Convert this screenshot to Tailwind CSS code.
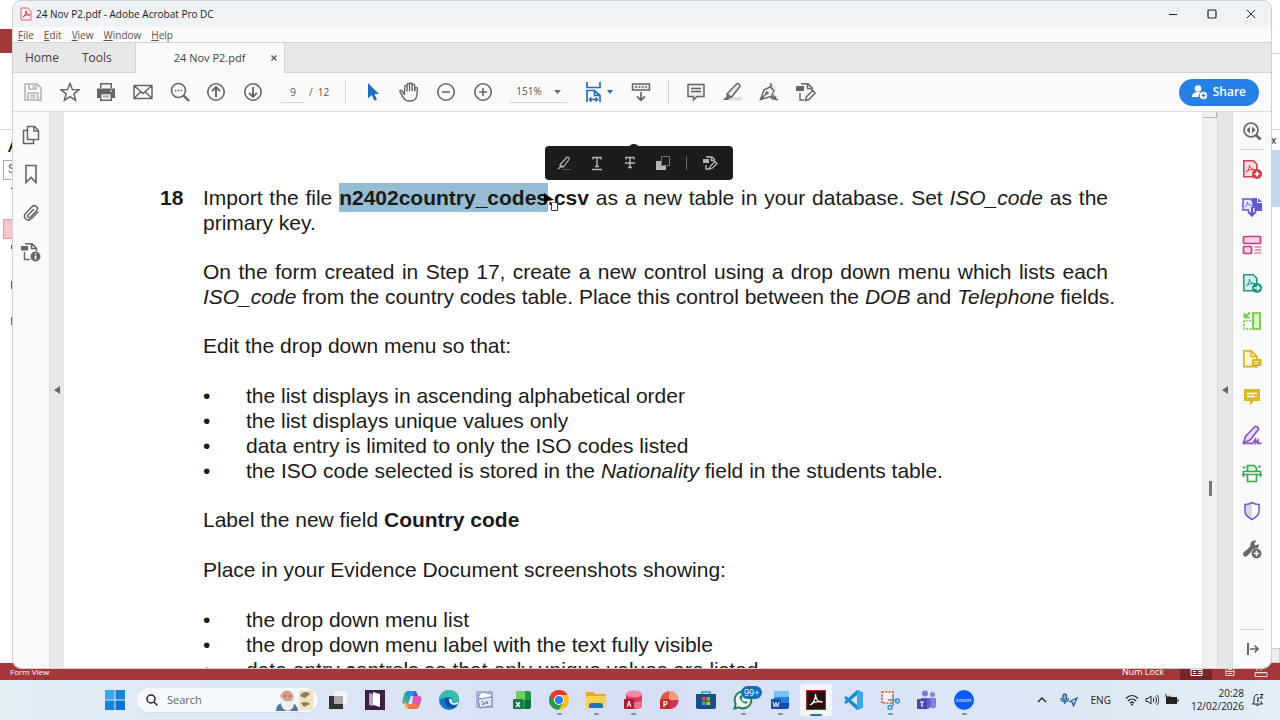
<!DOCTYPE html>
<html lang="en">
<head>
    <meta charset="UTF-8">
    <meta name="viewport" content="width=device-width, initial-scale=1.0">
    <script src="https://cdn.jsdelivr.net/npm/@tailwindcss/browser@4"></script>
    <title>24 Nov P2.pdf - Adobe Acrobat Pro DC</title>
</head>
<body class="h-screen flex flex-col overflow-hidden bg-white font-['Open_Sans','Noto_Sans',sans-serif] text-[#444]">

    <div class="relative flex-1 min-h-0">

        <!-- Access window behind -->
        <div class="h-full flex flex-col" aria-hidden="true">
            <div class="flex-1 min-h-0 flex justify-between overflow-hidden">
                <div class="w-[13px] pt-[29px] overflow-hidden font-['Liberation_Sans',sans-serif]">
                    <div class="h-6 bg-[#a4373a]"></div>
                    <div class="mt-[76px] border-t border-[#d4d4d4] pl-2 pt-1 text-lg leading-6 text-black">A</div>
                    <div class="ml-[3px] mt-[2px] h-5 w-6 border border-[#aaa] pl-1 text-xs text-[#555]">S</div>
                    <div class="ml-[11px] mt-2 h-px bg-[#333]"></div>
                    <div class="ml-[3px] mt-[30px] h-5 w-6 border border-[#d9a0a8] bg-[#f8c4cb]"></div>
                    <div class="ml-[11px] mt-[6px] h-1 bg-[#555]"></div>
                    <div class="ml-[11px] mt-8 h-2 bg-[#666]"></div>
                    <div class="ml-[11px] mt-7 h-2 bg-[#666]"></div>
                </div>
                <div class="w-[9px] pt-[53px] flex flex-col overflow-hidden">
                    <div class="h-[77px] border-y border-[#cfcfcf]"></div>
                    <div class="h-5 text-[10px] leading-5 text-black">x</div>
                    <div class="h-[57px] bg-[#c3d7ee]"></div>
                    <div class="mt-auto h-[15px] border border-[#ccc] bg-[#eee]"></div>
                </div>
            </div>
            <div class="h-[17px] flex items-center bg-[#a4373a] text-[8px] text-white pl-[10px] pr-3">
                <span>Form View</span>
                <span class="ml-auto mr-4 text-[9px]">Num Lock</span>
                <svg class="w-8 h-[17px] bg-[#7a2529]" viewBox="0 0 32 17" fill="none" stroke="#fff"><path d="M11 4.500h11v8H11zM11 6.500h11M13 8.500h3M18 8.500h3M13 10.500h3M18 10.500h3"/></svg>
                <svg class="w-9 h-[17px]" viewBox="0 0 36 17" fill="none" stroke="#f3d4d4"><path d="M14 4.500h8v8h-8zM14 8.500h8M16 6.500h4M16 10.500h4"/></svg>
                <svg class="w-5 h-[17px]" viewBox="0 0 20 17" fill="none" stroke="#f3d4d4"><path d="M7 9.500h12v4H7zM10 9v2M13 9v2M16 9v2M9 8V4h3M12 8l4-4"/></svg>
            </div>
        </div>

        <!-- Acrobat window -->
        <main class="absolute top-px bottom-3 left-[13px] right-[9px] flex flex-col overflow-hidden rounded-lg bg-[#fafafa] outline outline-[#cfcfcf]">
            <header class="h-[26px] shrink-0 flex items-center bg-[#edf3f7] pl-[7px] text-[10px] text-[#1b1b1b]">
                <svg class="mr-1 w-3 h-[14px]" viewBox="0 0 12 14" fill="none"><path d="M1 1h7l3 3v9H1z" fill="#fff0ef" stroke="#d9696b"/><path d="M3 10c2-1 3-4 3-6 0 3 2 4 4 4-2-.5-5 0-7 2z" stroke="#d83b3e"/></svg>
                <h1>24 Nov P2.pdf - Adobe Acrobat Pro DC</h1>
                <div class="ml-auto flex pr-[1px]">
                    <button aria-label="Minimize" class="w-[39px] grid place-items-center"><svg width="10" height="10" stroke="#222"><path d="M1 5.500h8"/></svg></button>
                    <button aria-label="Maximize" class="w-[39px] grid place-items-center"><svg width="10" height="10" stroke="#222" stroke-width="1.200" fill="none"><rect x="1" y="1" width="8" height="8" rx="1"/></svg></button>
                    <button aria-label="Close" class="w-[39px] grid place-items-center"><svg width="10" height="10" stroke="#222"><path d="M1 1l8 8M9 1l-8 8"/></svg></button>
                </div>
            </header>

            <nav class="h-[15px] shrink-0 flex items-center gap-[10px] pl-[5px] text-[10px] leading-none text-[#555]">
                <button><u>F</u>ile</button>
                <button><u>E</u>dit</button>
                <button><u>V</u>iew</button>
                <button><u>W</u>indow</button>
                <button><u>H</u>elp</button>
            </nav>

            <!-- Tabs -->
            <div class="h-[31px] shrink-0 flex bg-[#e7e7e7] border-y border-[#d3d3d3] text-[12px]">
                <button class="pl-3 pr-[11px]">Home</button>
                <button class="pl-3 pr-[23px]">Tools</button>
                <div class="-mb-px w-[150px] flex items-center bg-[#fafafa] border-x border-[#d3d3d3] pl-[38px] pr-[6px] text-[11px]">
                    <span>24 Nov P2.pdf</span>
                    <button aria-label="Close tab" class="ml-auto"><svg width="8" height="8" stroke="#555" stroke-width="1.300"><path d="M1.500 1.500l5 5M6.500 1.500l-5 5"/></svg></button>
                </div>
            </div>

            <!-- Toolbar -->
            <div class="h-[39px] shrink-0 flex items-center border-b border-[#dedede] pl-[2px] pr-3 text-[10px] text-[#555]">
                <div class="grid w-[256px] shrink-0 grid-cols-7 place-items-center">
                    <button aria-label="Save" disabled><svg width="20" height="20" fill="none" stroke="#b5b5b5" stroke-width="1.600"><path d="M2 2h12l4 4v12H2zM6 2v5h7V2M5 18v-7h10v7M7.500 13.500h5M7.500 15.500h5M10.500 3v3"/></svg></button>
                    <button aria-label="Star"><svg width="20" height="20" fill="none" stroke="#666" stroke-width="1.500"><path d="M10 1.500l2.400 6 6.600.3-5.100 4.100 1.700 6.300L10 14.600l-5.600 3.600 1.700-6.300L1 7.800l6.600-.3z"/></svg></button>
                    <button aria-label="Print"><svg width="20" height="20"><path d="M1 6.500h18V16h-3v-4H4v4H1z" fill="#666"/><path d="M4.700 6V1.700h10.600V6M4.700 11.500h10.600v6.800H4.700z" fill="#f5f5f5" stroke="#666" stroke-width="1.500"/><path d="M7 15.500h6v-2H7z" fill="#aaa"/><path d="M14 9h2" stroke="#fff"/></svg></button>
                    <button aria-label="Email"><svg width="20" height="20" fill="none" stroke="#666" stroke-width="1.500"><path d="M1 3.500h18v13H1zM1.500 4l8.500 7.500L18.500 4M1.500 16l6.500-6.500M18.500 16L12 9.500"/></svg></button>
                    <button aria-label="Find"><svg width="20" height="20" fill="none" stroke="#666" stroke-width="1.600"><circle cx="8.500" cy="8.500" r="7"/><path d="M13.500 13.500l5.500 5.500" stroke-width="2.400"/><path d="M4.800 8.500h1.600M7.700 8.500h1.600M10.600 8.500h1.600"/></svg></button>
                    <button aria-label="Previous page"><svg width="20" height="20" fill="none" stroke="#666" stroke-width="1.600"><circle cx="10" cy="10" r="8.200"/><path d="M10 15V5.500M6 9.200l4-4 4 4" stroke-width="1.900"/></svg></button>
                    <button aria-label="Next page"><svg width="20" height="20" fill="none" stroke="#666" stroke-width="1.600"><circle cx="10" cy="10" r="8.200"/><path d="M10 5v9.500M6 10.800l4 4 4-4" stroke-width="1.900"/></svg></button>
                </div>
                <input aria-label="Page number" value="9" class="ml-[10px] w-6 h-[22px] border-b border-[#d5d5d5] text-center">
                <span class="ml-1">/&nbsp; 12</span>
                <div class="ml-4 mr-2 h-6 w-px bg-[#d5d5d5]"></div>
                <div class="grid w-[147px] shrink-0 grid-cols-4 place-items-center">
                    <button aria-label="Select"><svg width="20" height="20" fill="#1f6fc0"><path d="M5 1l11 11h-4.600l2.600 5.600-2.700 1.200-2.500-5.700L5 16.300z"/></svg></button>
                    <button aria-label="Hand"><svg width="20" height="20" fill="none" stroke="#666" stroke-width="1.400" stroke-linecap="round" stroke-linejoin="round"><path d="M5.500 12.500L3 8.800c-.9-1.300-2.600-.3-1.900 1.100l3.400 6c1.300 2.200 3 3.100 5.500 3.100h1c4 0 6.600-2.300 7-6.500l.4-5.700c0-1.700-2-1.800-2.300-.2L15.700 9V3.500c0-1.700-2.500-1.700-2.500 0V8.500 2.200c0-1.700-2.600-1.700-2.600 0v6.300V2.700c0-1.700-2.500-1.700-2.500 0V9 4.700c0-1.600-2.400-1.600-2.400 0z"/></svg></button>
                    <button aria-label="Zoom out"><svg width="20" height="20" fill="none" stroke="#666" stroke-width="1.600"><circle cx="10" cy="10" r="8.200"/><path d="M6 10h8"/></svg></button>
                    <button aria-label="Zoom in"><svg width="20" height="20" fill="none" stroke="#666" stroke-width="1.600"><circle cx="10" cy="10" r="8.200"/><path d="M6 10h8M10 6v8"/></svg></button>
                </div>
                <div class="relative ml-2">
                    <select aria-label="Zoom level" class="appearance-none w-[58px] h-[22px] border-b border-[#d5d5d5] pl-[7px]"><option>151%</option></select>
                    <svg class="absolute right-[6px] top-[9px] pointer-events-none" width="7" height="4" fill="#666"><path d="M0 0h7L3.500 4z"/></svg>
                </div>
                <button aria-label="Fit width" class="ml-[18px] flex items-center gap-[5px]">
                    <svg width="17" height="22" fill="none" stroke="#1f6fc0" stroke-width="1.700"><path d="M2 1v5.500h13V1M2 21V9.500h7.500l5.500 5V21M9.500 9.500v5H15M4.500 18.500h8M6.500 16.500l-2 2 2 2M10.500 16.500l2 2-2 2"/></svg>
                    <svg width="6" height="4" fill="#1f6fc0"><path d="M0 0h6L3 4z"/></svg>
                </button>
                <button aria-label="Scroll mode" class="ml-[18px]"><svg width="20" height="20" fill="none" stroke="#666" stroke-width="1.500"><path d="M1.500 2h17v6h-17z" fill="#eee"/><path d="M4 5h12" stroke-dasharray="2 1.300"/><path d="M10 10v8M6 14.300l4 4 4-4" stroke-width="1.700"/></svg></button>
                <div class="ml-[17px] mr-2 h-6 w-px bg-[#d5d5d5]"></div>
                <div class="grid w-[147px] shrink-0 grid-cols-4 place-items-center">
                    <button aria-label="Comment"><svg width="20" height="20" fill="#eee" stroke="#666" stroke-width="1.500"><path d="M2 2.500h16v12H11l-3.500 3.500v-3.500H2zM5 6.500h10M5 9.500h10"/></svg></button>
                    <button aria-label="Highlight"><svg width="20" height="20" fill="none" stroke="#666" stroke-width="1.500"><path d="M8 15h12v3.500H6z" fill="#ddd" stroke="none"/><path d="M5 12L14.500 2c1.500-1.300 4.500 1 3.200 2.800L9.500 15.300 5.500 15zM5 12l4.500 3.300" fill="#e6e6e6"/><path d="M1 18l4-4 3 2-2 2z" fill="#666" stroke="none"/></svg></button>
                    <button aria-label="Sign"><svg width="20" height="20" fill="none" stroke="#666" stroke-width="1.500"><path d="M12 1l6 6-3 1.500-4-4z" fill="#ddd" stroke="none"/><path d="M1.500 17.500L5 8l6-3 4 4-3 5.500zM1.500 17.500l6-6M11.500 1l1 4M12 17l2.500-3v3l2-2v2.500H19"/><circle cx="8" cy="11" r="1"/></svg></button>
                    <button aria-label="More tools"><svg width="20" height="20" fill="none" stroke="#666" stroke-width="1.500"><path d="M5 1.700h7l4 4v3M11.500 2v4.500H16M4 11v7h4"/><path d="M0 4h8v5H0z" fill="#666" stroke="none"/><path d="M9.500 18.500l.8-3.500 6.500-6.500 2.500 2.500-6.500 6.500z"/></svg></button>
                </div>
                <button class="ml-auto h-[27px] flex items-center gap-[5px] rounded-full bg-[#2680e5] px-[13px] text-[12px] font-semibold text-white">
                    <svg width="16" height="16" fill="#fff"><circle cx="6" cy="4.500" r="3.300"/><path d="M0 13c0-3.500 2.500-5 6-5 1 0 2 .2 2.700.6A5 5 0 0 0 6.500 13z"/><circle cx="11.500" cy="11.500" r="3.700"/><path d="M9.500 11.500h4M11.500 9.500v4" stroke="#2680e5" stroke-width="1.200"/></svg>
                    Share
                </button>
            </div>

            <div class="flex flex-1 min-h-0">
                <!-- Navigation panes -->
                <aside class="w-9 shrink-0 flex flex-col pt-[3px]">
                    <button aria-label="Page thumbnails" class="h-[39px] grid place-items-center"><svg width="18" height="20" fill="none" stroke="#666" stroke-width="1.500"><path d="M5.500 1.500h7l4 4v9h-11zM12 1.500v4.500h4.500M5.500 5.500h-4v13h10v-4"/></svg></button>
                    <button aria-label="Bookmarks" class="h-[39px] grid place-items-center"><svg width="14" height="20" fill="none" stroke="#666" stroke-width="1.600"><path d="M2 1.500h10v17l-5-5-5 5z"/></svg></button>
                    <button aria-label="Attachments" class="h-[39px] grid place-items-center"><svg width="18" height="20" fill="none" stroke="#666" stroke-width="1.500" stroke-linecap="round"><path d="M16 9l-6.500 6.500c-4 4-9.500-.8-5.800-5.300L10 3.800c3.200-3 7.300.8 4.300 4.300L8.500 14c-1.800 1.700-4-.5-2.300-2.300L11.500 6.500"/></svg></button>
                    <button aria-label="Document info" class="h-[39px] grid place-items-center"><svg width="20" height="20" fill="none" stroke="#666" stroke-width="1.500"><path d="M4 1.700h7l4.500 4.500V9M10.500 2v4.500H15M3.500 10v7.500H9"/><path d="M0 4h7v4.500H0z" fill="#666" stroke="none"/><circle cx="14.500" cy="14.500" r="5" fill="#666" stroke="none"/><path d="M14.500 13.500v4M14.500 11.200v1.300" stroke="#fff" stroke-width="1.600"/></svg></button>
                </aside>
                <button aria-label="Toggle navigation pane" class="w-[15px] shrink-0 grid place-items-center bg-[#e8e8e8] border-l border-[#dcdcdc]"><svg width="6" height="8" fill="#666"><path d="M6 0v8L0 4z"/></svg></button>

                <!-- Page -->
                <article class="relative flex-1 min-w-0 overflow-hidden bg-white pt-[26px] pl-24 pr-[94px] font-['Liberation_Sans',Arial,sans-serif] text-[21px] leading-[25px] text-[#1a1a1a]">
                    <p class="text-center font-bold">9</p>
                    <section class="mt-[22px] flex">
                        <b class="w-[43px] shrink-0">18</b>
                        <div class="flex-1 min-w-0">
                            <p class="text-justify">Import the file <b><mark class="bg-[#94bcd3] text-inherit py-[3px]">n2402country_codes</mark>.csv</b> as a new table in your database. Set <i>ISO_code</i> as the primary key.</p>
                            <p class="mt-6 text-justify">On the form created in Step 17, create a new control using a drop down menu which lists each <span class="whitespace-nowrap"><i>ISO_code</i> from the country codes table. Place this control between the <i>DOB</i> and <i>Telephone</i> fields.</span></p>
                            <p class="mt-6">Edit the drop down menu so that:</p>
                            <ul class="mt-[25px]">
                                <li class="flex"><span class="w-[43px] shrink-0">•</span>the list displays in ascending alphabetical order</li>
                                <li class="flex"><span class="w-[43px] shrink-0">•</span>the list displays unique values only</li>
                                <li class="flex"><span class="w-[43px] shrink-0">•</span>data entry is limited to only the ISO codes listed</li>
                                <li class="flex"><span class="w-[43px] shrink-0">•</span><span>the ISO code selected is stored in the <i>Nationality</i> field in the students table.</span></li>
                            </ul>
                            <p class="mt-6">Label the new field <b>Country code</b></p>
                            <p class="mt-[25px]">Place in your Evidence Document screenshots showing:</p>
                            <ul class="mt-[25px]">
                                <li class="flex"><span class="w-[43px] shrink-0">•</span>the drop down menu list</li>
                                <li class="flex"><span class="w-[43px] shrink-0">•</span>the drop down menu label with the text fully visible</li>
                                <li class="flex"><span class="w-[43px] shrink-0">•</span>data entry controls so that only unique values are listed</li>
                            </ul>
                        </div>
                    </section>

                    <!-- Selection toolbar -->
                    <div class="absolute left-[481px] top-[34px] w-[188px] h-[34px] flex items-center gap-[15px] rounded-sm bg-[#1c1c1c] pl-[11px]">
                        <div class="flex gap-[17px]">
                            <button aria-label="Highlight text"><svg width="16" height="16" fill="none" stroke="#b4b4b4" stroke-width="1.200"><path d="M4 10l6.500-7.500c1.200-1 3.500.6 2.500 2L7.500 12 4.500 12zM4 10l3.500 2M2 14l2.500-2"/><path d="M6 14.500h9" stroke="#555"/></svg></button>
                            <button aria-label="Underline text"><svg width="16" height="16" fill="none" stroke="#b4b4b4" stroke-width="1.400"><path d="M4 4.500V2.500h8v2M8 2.500v9M6 11.500h4M3 14.500h10"/></svg></button>
                            <button aria-label="Strikethrough text"><svg width="16" height="16" fill="none" stroke="#b4b4b4" stroke-width="1.400"><path d="M4 4.500V2.500h8v2M8 2.500v10M6 12.500h4M3 8h10"/></svg></button>
                            <button aria-label="Redact"><svg width="16" height="16"><path d="M1 6h5v5h5v4H1z" fill="#b4b4b4"/><path d="M6.500 1.500h8v9h-8z" fill="none" stroke="#777"/></svg></button>
                        </div>
                        <div class="h-[14px] w-px bg-[#666]"></div>
                        <button aria-label="Edit PDF"><svg width="16" height="16" fill="none" stroke="#b4b4b4" stroke-width="1.300"><path d="M4 2h6l3 3M9.500 2v3.500H13M4 10v4h3"/><path d="M1 4h6v4H1z" fill="#b4b4b4" stroke="none"/><path d="M7.500 14l1-3 4.500-4.500 2 2-4.500 4.500z"/></svg></button>
                    </div>
                    <!-- Pointer -->
                    <svg class="absolute left-[479px] top-20" width="18" height="20"><path d="M1 1v10l3-2 7-1z" fill="#000"/><path d="M8.500 10.500h6v8h-6z" fill="#fff" stroke="#333"/><path d="M8 10h4" stroke="#fff"/></svg>
                </article>

                <div class="w-[15px] shrink-0 flex flex-col items-center bg-[#f0f0f0] border-l border-[#e8e8e8]">
                    <div class="h-[6px] w-full border-b border-r border-[#b5b5b5]"></div>
                    <div class="mt-[363px] h-[15px] w-[3px] bg-[#777]"></div>
                </div>
                <button aria-label="Toggle tools pane" class="w-4 shrink-0 grid place-items-center bg-[#e6e6e6] border-x border-[#d8d8d8]"><svg width="6" height="8" fill="#666"><path d="M6 0v8L0 4z"/></svg></button>

                <!-- Tools pane -->
                <aside class="w-[38px] shrink-0 flex flex-col">
                    <button aria-label="Search tools" class="h-[37px] shrink-0 grid place-items-center"><svg width="20" height="20" fill="none" stroke="#666" stroke-width="1.700"><circle cx="9" cy="9" r="7"/><path d="M14 14l4.500 4.500" stroke-width="2.600"/><path d="M8 5.500v7L4.500 9zM10 5.500v7L13.500 9z" fill="#666" stroke="none"/></svg></button>
                    <hr class="mx-[7px] border-[#d5d5d5]">
                    <button aria-label="Create PDF" class="h-[38px] shrink-0 grid place-items-center"><svg width="20" height="20" fill="none"><path d="M1.800 1.800h9.500l3.500 3.500v12.400h-13z" fill="#fbdfe1" stroke="#cf4251" stroke-width="1.600"/><path d="M4 13c2-1.500 3.500-4 3.500-7 0 3 2 4.500 5 4.500-3-.5-6 .5-8.500 2.500z" stroke="#cf4251"/><circle cx="15" cy="15" r="5" fill="#cf3d4d"/><path d="M12.500 15h5M15 12.500v5" stroke="#fff" stroke-width="1.500"/></svg></button>
                    <button aria-label="Combine files" class="h-[38px] shrink-0 grid place-items-center"><svg width="20" height="20" fill="none" stroke="#6159d6" stroke-width="1.500"><path d="M10 1h6l4 4v9h-10z" fill="#6159d6" stroke="none"/><path d="M15.500 1v4.500H20" stroke="#fff" stroke-width="1"/><path d="M1 2h7.500L11 4.500V13H1z" fill="#e8e6fb"/><path d="M3 10c2-1 2.500-3 2.500-5 0 2 2 3.500 4 3.500" stroke-width="1"/><path d="M10 11v7" stroke="#fafafa" stroke-width="5"/><path d="M10 10v8M6 14.500l4 4 4-4" stroke-width="2.200"/></svg></button>
                    <button aria-label="Organize pages" class="h-[38px] shrink-0 grid place-items-center"><svg width="20" height="20" fill="#fad1e6" stroke="#cb3c87" stroke-width="1.700"><rect x="1.500" y="1.500" width="17" height="7" rx="1"/><rect x="1.500" y="11.500" width="8" height="7" rx="1"/><path d="M12.500 12h6.500M12.500 15h6.500M12.500 18h6.500" stroke="#e07bb0" stroke-width="1.300"/></svg></button>
                    <button aria-label="Export PDF" class="h-[38px] shrink-0 grid place-items-center"><svg width="20" height="20" fill="none"><path d="M1.800 1.800h9.500l3.500 3.500v12.400h-13z" fill="#d5efeb" stroke="#24998a" stroke-width="1.600"/><path d="M4 13c2-1.500 3.500-4 3.500-7 0 3 2 4.500 5 4.500-3-.5-6 .5-8.500 2.500z" stroke="#24998a"/><circle cx="15" cy="15" r="5" fill="#179080"/><path d="M12 15h5M15 12.500l2.500 2.500-2.500 2.500" stroke="#fff" stroke-width="1.400"/></svg></button>
                    <button aria-label="Crop pages" class="h-[38px] shrink-0 grid place-items-center"><svg width="20" height="20" fill="none" stroke="#6fc43c" stroke-width="1.700"><path d="M11 2h7v16h-7z" fill="#d9f2c8"/><path d="M9 9.500H2V18h8" stroke-dasharray="2 1.500"/><path d="M2.500 2v4.500H8M3 6l5-4.500"/></svg></button>
                    <button aria-label="Send for comments" class="h-[38px] shrink-0 grid place-items-center"><svg width="20" height="20" fill="none"><path d="M1.800 1.800h7.500l5.500 5.500v10.400h-13z" fill="#fbf2cf" stroke="#d9b51f" stroke-width="1.700"/><path d="M9 2v5.500h5.500" stroke="#d9b51f" stroke-width="1.500"/><path d="M10 10h9.500v7H16l-2.500 2.500V17H10z" fill="#d9b51f"/><path d="M12 12.500h5.500M12 14.500h4" stroke="#fff"/></svg></button>
                    <button aria-label="Comment tool" class="h-[38px] shrink-0 grid place-items-center"><svg width="18" height="20"><path d="M1 2h16v12h-6l-4 4.500V14H1z" fill="#dcb822"/><path d="M4 6.500h10M4 9.500h8" stroke="#fff" stroke-width="1.500"/></svg></button>
                    <button aria-label="Fill and sign" class="h-[38px] shrink-0 grid place-items-center"><svg width="20" height="20" fill="none" stroke="#8659c4" stroke-width="1.700"><path d="M1.500 18l2-6.500 9-9.500c1.700-1.500 5 .6 3.500 3L8 15z" fill="#e8dcf7"/><path d="M1 18.300h9.500l3-4v4l2.500-3v3h3.500"/></svg></button>
                    <button aria-label="Scan" class="h-[38px] shrink-0 grid place-items-center"><svg width="20" height="20" fill="none" stroke="#3aa952" stroke-width="1.700"><path d="M5.500 8V2.500H12L14.500 5v3" fill="#dcf2e0"/><path d="M1.500 14V8.500h17V14M0 11.500h20M5.500 12v6.500h9V12"/><path d="M2 3v3M.5 4.500h3M17.500 2v3M16 3.500h3" stroke-width="1"/></svg></button>
                    <button aria-label="Protect" class="h-[38px] shrink-0 grid place-items-center"><svg width="18" height="20"><path d="M9 1.500c2 1.500 4.500 2 7 2V10c0 4-3 6.500-7 8.500C5 16.500 2 14 2 10V3.500c2.500 0 5-.5 7-2z" fill="#fff"/><path d="M9 1.500v17C5 16.500 2 14 2 10V3.500c2.500 0 5-.5 7-2z" fill="#d9d6f5"/><path d="M9 1.500c2 1.500 4.500 2 7 2V10c0 4-3 6.500-7 8.500C5 16.500 2 14 2 10V3.500c2.500 0 5-.5 7-2z" fill="none" stroke="#6b60c8" stroke-width="1.600"/></svg></button>
                    <button aria-label="More tools pane" class="h-[38px] shrink-0 grid place-items-center"><svg width="20" height="20"><path d="M1.500 13.500l7-6C7.500 3.500 11 .5 14.500 1.800L12 4.500l1.500 2L16.500 5c1 3-1.500 5.500-4.500 5l-7.500 7.500c-2 1.300-4.500-2-3-4z" fill="#666"/><circle cx="14.500" cy="14.500" r="5.600" fill="#fafafa"/><circle cx="14.500" cy="14.500" r="4.900" fill="#666"/><path d="M11.800 14.500h5.400M14.500 11.800v5.400" stroke="#fff" stroke-width="1.500"/></svg></button>
                    <hr class="mx-[7px] mt-auto border-[#d5d5d5]">
                    <button aria-label="Collapse tools pane" class="h-[38px] shrink-0 grid place-items-center"><svg width="14" height="14" fill="none" stroke="#666" stroke-width="1.600"><path d="M3 1v12" stroke-width="2"/><path d="M5 7h8M9.500 3.500L13 7l-3.500 3.500"/></svg></button>
                </aside>
            </div>
        </main>
    </div>

    <!-- Taskbar -->
    <footer class="h-10 shrink-0 flex items-center bg-linear-to-r from-[#e3edf4] via-[#d6def5] to-[#e2edf5] pl-[105px] pr-4 text-[10px] text-[#222]">
        <button aria-label="Start"><svg width="20" height="20" fill="#1583d8"><path d="M0 0h9.500v9.500H0z" fill="#38a9ea"/><path d="M10.500 0H20v9.500h-9.500zM0 10.500h9.500V20H0z"/><path d="M10.500 10.500H20V20h-9.500z" fill="#0f70cc"/></svg></button>
        <label class="ml-3 h-6 w-[181px] shrink-0 flex items-center rounded-full bg-[#f5f8fd] pl-[9px] pr-1 shadow-xs">
            <svg class="shrink-0" width="12" height="12" fill="none" stroke="#222" stroke-width="1.500"><circle cx="5" cy="5" r="4"/><path d="M8 8l3.500 3.500"/></svg>
            <input type="text" aria-label="Search" placeholder="Search" class="ml-[9px] w-0 flex-1 text-[11px] placeholder:text-[#666]">
            <svg class="shrink-0" width="38" height="22"><rect x="23" y="1" width="14" height="20" rx="2" fill="#f3e2c1"/><path d="M24 7c2-5 8-5 10-2l-5 4zM25 14c3-2 7-1 9 1l-6 3z" fill="#8b7d5d"/><path d="M0 22c0-6 4-8 7-8h10c3 2 5 4 5 8z" fill="#4c7aa6"/><circle cx="11" cy="8" r="6.500" fill="#d99d8b"/><path d="M5 8c-1 6 0 13 7 14 6-1 7-8 6-13l-3 3H9z" fill="#f1eeee"/><path d="M8 7h2M13 7h2" stroke="#6d4c41"/></svg>
        </label>
        <div class="ml-[2px] grid w-[662px] shrink-0 grid-cols-18 place-items-center">
            <button aria-label="Task view"><svg width="20" height="20"><path d="M6 1h13v13H6z" fill="#f3f4f7"/><path d="M1 6h14v13H1z" fill="#333"/><path d="M6 6h9v8H6z" fill="#aaa"/></svg></button>
            <button aria-label="Library"><svg width="20" height="20"><path d="M0 0h20v20H0z" fill="#3c2140"/><path d="M4 3l4 1v12l-4-1z" fill="#b9a8bd"/><path d="M8 2l7 2v13l-7-2z" fill="#fff"/></svg></button>
            <button aria-label="Copilot"><svg width="20" height="20"><path d="M6 1h7l2 5H9L6 14H3c-3 0-3-3-2-5l2-6c.6-1 1.500-2 3-2z" fill="#2a8fe0"/><path d="M1 9l5 5 3 5H6c-1.500 0-2.400-1-3-3z" fill="#f0b93c"/><path d="M12 1c2 0 2.600 1 3 3l1 2h-4z" fill="#3556c9"/><path d="M11 6h6c3 0 3 3 2 5l-2 6c-.6 1-1.500 2-3 2H7l-2-4h5z" fill="#d95bb6"/><path d="M8 14h9l-1 3c-.5 1.300-1.500 2-3 2H7l-2-4z" fill="#f4744f"/><path d="M1 9l2-6 4 5-2 6z" fill="#34b08f"/></svg></button>
            <button aria-label="Edge"><svg width="20" height="20"><circle cx="10" cy="10" r="10" fill="#1673c6"/><path d="M.5 8C2 2.500 6 0 10 0c6 0 10 4 10 8.500 0 4-5 5-7 3.500 1.500-2 0-5-4-5-4 0-7 1-8.500 4z" fill="#35bfa8"/><path d="M7 8c-3 5 1 11 9 9.500 1-.5 2-1.500 2.500-2.500-5 2-9-1-8-5z" fill="#0d4e9e"/><path d="M10 9c2-1 3.500 1 3 2.500-.5 1.500 3 2.500 6 0L19 14c-5 2-9 0-9-5z" fill="#e7effb"/></svg></button>
            <button aria-label="Run dialog"><svg width="20" height="20"><path d="M1 1h17v17H1z" fill="#a9b2d6"/><path d="M6 2l11 2-3 6-11-2z" fill="#fff" stroke="#8f98c2"/><path d="M3 9l14-2v9l-12 2z" fill="#dfe4f7" stroke="#7a84b8"/><path d="M7 11l2 3M11 11l2 3M7 15l6-3" stroke="#5e69a3"/></svg></button>
            <button aria-label="Excel"><svg width="20" height="20"><rect x="4" y="1" width="15" height="18" rx="2" fill="#1f9a4d"/><path d="M4 1h9v9H4z" fill="#6fcf62"/><path d="M13 10h6v7l-2 2h-4z" fill="#0f6b37"/><rect x="1" y="9" width="10" height="10" rx="1" fill="#107c41"/><path d="M4 12l4 5M8 12l-4 5" stroke="#fff" stroke-width="1.300"/></svg></button>
            <button aria-label="Chrome" class="relative"><svg width="20" height="20"><circle cx="10" cy="10" r="10" fill="#fbc116"/><path d="M1.300 5A10 10 0 0 1 18.700 5H10L5.700 12.500z" fill="#e33b2e"/><path d="M1.300 5A10 10 0 0 0 9.500 20l4.800-7.500H5.700z" fill="#249b48"/><circle cx="10" cy="10" r="5" fill="#fff"/><circle cx="10" cy="10" r="4" fill="#2b7de9"/></svg><span class="absolute left-2 -bottom-[5px] h-[2px] w-[5px] rounded bg-[#858b9b]"></span></button>
            <button aria-label="File Explorer" class="relative"><svg width="20" height="20"><path d="M0 2h7l2 2h11v14H0z" fill="#eaa820"/><path d="M0 6h20v12H0z" fill="#fbd156"/><path d="M3 18v-3c0-1 1-2 2-2h10c1 0 2 1 2 2v3z" fill="#1d72b8"/></svg><span class="absolute left-2 -bottom-[5px] h-[2px] w-[5px] rounded bg-[#858b9b]"></span></button>
            <button aria-label="Access" class="relative"><svg width="20" height="20"><path d="M3 4v12c0 4 16 4 16 0V4z" fill="#d93b62"/><path d="M5 16c3 3 14 3 14 0v-5L5 14z" fill="#f27091"/><ellipse cx="11" cy="4" rx="8" ry="3.500" fill="#f58aa4"/><rect x="1" y="9" width="10" height="10" rx="1" fill="#b01d33"/><path d="M4 17l2-6 2 6M5 15h3" fill="none" stroke="#fff"/></svg><span class="absolute left-2 -bottom-[5px] h-[2px] w-[5px] rounded bg-[#858b9b]"></span></button>
            <button aria-label="PowerPoint"><svg width="20" height="20"><circle cx="10.500" cy="10" r="9" fill="#e2563c"/><path d="M10 1a9 9 0 0 1 9.500 9H10z" fill="#f79a7c"/><path d="M10 10h9.500a9 9 0 0 1-9.500 9z" fill="#cf3356"/><rect x="1" y="9" width="10" height="10" rx="1" fill="#bd2f22"/><path d="M5 17v-5.500h1.500c2 0 2 3 0 3H5" fill="none" stroke="#fff" stroke-width="1.200"/></svg></button>
            <button aria-label="Microsoft Store"><svg width="20" height="20"><path d="M6 5V2h8v3" fill="none" stroke="#2796dd" stroke-width="1.600"/><path d="M0 4h20v13c0 1-1 2-2 2H2c-1 0-2-1-2-2z" fill="#194f86"/><path d="M6 7h3.500v3.500H6z" fill="#f25022"/><path d="M10.500 7H14v3.500h-3.500z" fill="#7fba00"/><path d="M6 11.500h3.500V15H6z" fill="#2aa7e8"/><path d="M10.500 11.500H14V15h-3.500z" fill="#ffb900"/></svg></button>
            <button aria-label="WhatsApp" class="relative"><svg width="20" height="20" fill="none"><path d="M1.500 18.500l1.200-4.500A8.300 8.300 0 1 1 6 17.300z" fill="#eef6f1" stroke="#23805a" stroke-width="2"/><path d="M7 6c-2 2 3 8.500 6.500 7.500 1.500-.5 1-1.500.5-2l-1.500-.5-1 1c-1.500-.5-2.500-1.500-3-3l1-1L9 6c-.6-.6-1.300-.6-2 0z" fill="#23805a"/></svg><span class="absolute left-2 -top-1 rounded-full bg-[#0f6fb8] px-[3px] text-[9px] leading-[13px] text-white">99+</span><span class="absolute left-2 -bottom-[5px] h-[2px] w-[5px] rounded bg-[#858b9b]"></span></button>
            <button aria-label="Word" class="relative"><svg width="20" height="20"><rect x="4" y="1" width="15" height="18" rx="2" fill="#2a7de1"/><path d="M4 1h15v6H4z" fill="#76c3f7"/><path d="M4 13h15v4l-2 2H4z" fill="#1749a8"/><rect x="1" y="9" width="10" height="10" rx="1" fill="#174ea6"/><path d="M3 12l1.500 5L6 12.500 7.500 17 9 12" fill="none" stroke="#fff"/></svg><span class="absolute left-2 -bottom-[5px] h-[2px] w-[5px] rounded bg-[#858b9b]"></span></button>
            <button aria-label="Acrobat" class="relative grid h-8 w-8 place-items-center rounded bg-[#f3f5fb]"><svg width="20" height="20"><path d="M.5.500h19v19H.5z" fill="#2a0f0e" stroke="#b3261e"/><path d="M4 15c3-1.500 6-6 5.500-11 0 5 2.500 8 7 8-4.500-1-9 0-12.500 3z" fill="none" stroke="#fff" stroke-width="1.300"/></svg><span class="absolute left-[10px] bottom-0 h-[2px] w-3 rounded bg-[#1877bd]"></span></button>
            <button aria-label="VS Code"><svg width="20" height="20"><path d="M14 0l6 2.500v15L14 20 1 8l2-2 11 9V5L3 14l-2-2z" fill="#168ad2"/><path d="M14 0l6 2.500v15L14 20z" fill="#3aa9ea"/></svg></button>
            <button aria-label="Snipping Tool" class="relative"><svg width="20" height="20" fill="none"><path d="M2 2h11v11H2z" fill="#eef1f6" stroke="#d5532c" stroke-width="1.600" stroke-dasharray="2 1.300"/><path d="M8 10h9M13 6v10" stroke="#8b98a8" stroke-width="2"/><circle cx="17.500" cy="11" r="2" stroke="#2a93cf" stroke-width="1.400"/><circle cx="10" cy="17.500" r="2" stroke="#2a93cf" stroke-width="1.400"/></svg><span class="absolute left-2 -bottom-[5px] h-[2px] w-[5px] rounded bg-[#858b9b]"></span></button>
            <button aria-label="Teams"><svg width="20" height="20"><circle cx="8" cy="3.500" r="3" fill="#7480e0"/><circle cx="15.500" cy="4.500" r="2.500" fill="#8d7ae6"/><path d="M12 8h7v8c0 2-3 3-5 2z" fill="#8d7ae6"/><path d="M4 8h10v8c0 4-10 4-10 0z" fill="#5d63cf"/><rect x="0" y="9" width="10" height="10" rx="1" fill="#4b45ae"/><path d="M3 12h4M5 12v5" stroke="#fff" stroke-width="1.200"/></svg></button>
            <button aria-label="Zoom" class="relative grid h-5 w-5 place-items-center rounded-full bg-[#0b5cff] text-[6px] leading-none text-white">zoom<span class="absolute left-2 -bottom-[5px] h-[2px] w-[5px] rounded bg-[#858b9b]"></span></button>
        </div>
        <div class="ml-auto flex items-center">
            <button aria-label="Hidden icons"><svg width="10" height="6" fill="none" stroke="#222" stroke-width="1.300"><path d="M1 5l4-4 4 4"/></svg></button>
            <svg class="ml-[13px]" width="18" height="14" fill="none" stroke="#2a5c9c" stroke-width="1.300"><rect x="3" y="1" width="3.500" height="6" rx="1.700" fill="#8fb0dc"/><path d="M1 5c0 5 7.500 5 7.500 0M4.700 9v2M10 8.500l7-3.500-3.500 8-1-3.500z"/></svg>
            <button class="ml-[13px]">ENG</button>
            <button aria-label="Network, volume and battery" class="ml-[14px] flex items-center gap-[6px]">
                <svg width="14" height="12" fill="none" stroke="#222" stroke-width="1.200"><path d="M1 4.500c3.500-4 8.500-4 12 0M3 7c2.500-2.700 5.500-2.700 8 0M5 9c1.300-1.200 2.700-1.200 4 0"/><circle cx="7" cy="10.500" r="1" fill="#222" stroke="none"/></svg>
                <svg width="14" height="12" fill="none" stroke="#222"><path d="M1 4.500h2L6 2v8L3 7.500H1zM8 4c1 1.300 1 2.700 0 4M10 2.500c2 2 2 5 0 7M12 1c2.300 3 2.300 7 0 10"/></svg>
                <svg width="14" height="12"><path d="M1 3h11v7H1z" fill="#222"/><path d="M12.500 5h1v3h-1z" fill="#222"/><path d="M1 0v3h4V1.500" fill="none" stroke="#222"/></svg>
            </button>
            <button class="ml-3 text-right leading-[13px]">20:28<br>12/02/2026</button>
            <button aria-label="Notifications" class="ml-[7px]"><svg width="13" height="14" fill="none" stroke="#222"><path d="M7 1.500C4 1.500 3 3.500 3 6v3l-1.500 2h10L10 9V8M5 11.500c.5 1.500 2.500 1.500 3 0M6 5h2L6 8h2M9 1.500h3L9 5h3"/></svg></button>
        </div>
    </footer>
</body>
</html>
